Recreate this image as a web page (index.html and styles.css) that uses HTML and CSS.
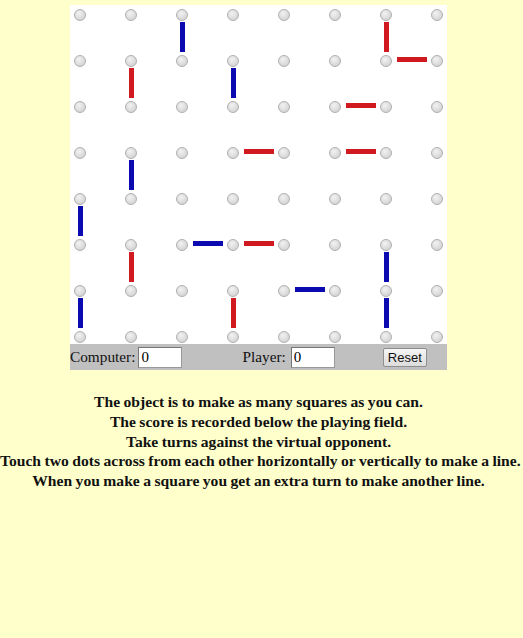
FILE: index.html
```html
<!DOCTYPE html>
<html>
<head>
<meta charset="utf-8">
<title>Dots and Boxes</title>
<link rel="stylesheet" href="styles.css">
</head>
<body>
<div class="game">
  <div class="board">
    <div class="drow"><i class="d"></i><b class="h"></b><i class="d"></i><b class="h"></b><i class="d"></i><b class="h"></b><i class="d"></i><b class="h"></b><i class="d"></i><b class="h"></b><i class="d"></i><b class="h"></b><i class="d"></i><b class="h"></b><i class="d"></i></div>
    <div class="grow"><b class="v"></b><b class="v"></b><b class="v blue"></b><b class="v"></b><b class="v"></b><b class="v"></b><b class="v red"></b><b class="v"></b></div>
    <div class="drow"><i class="d"></i><b class="h"></b><i class="d"></i><b class="h"></b><i class="d"></i><b class="h"></b><i class="d"></i><b class="h"></b><i class="d"></i><b class="h"></b><i class="d"></i><b class="h"></b><i class="d"></i><b class="h red"></b><i class="d"></i></div>
    <div class="grow"><b class="v"></b><b class="v red"></b><b class="v"></b><b class="v blue"></b><b class="v"></b><b class="v"></b><b class="v"></b><b class="v"></b></div>
    <div class="drow"><i class="d"></i><b class="h"></b><i class="d"></i><b class="h"></b><i class="d"></i><b class="h"></b><i class="d"></i><b class="h"></b><i class="d"></i><b class="h"></b><i class="d"></i><b class="h red"></b><i class="d"></i><b class="h"></b><i class="d"></i></div>
    <div class="grow"><b class="v"></b><b class="v"></b><b class="v"></b><b class="v"></b><b class="v"></b><b class="v"></b><b class="v"></b><b class="v"></b></div>
    <div class="drow"><i class="d"></i><b class="h"></b><i class="d"></i><b class="h"></b><i class="d"></i><b class="h"></b><i class="d"></i><b class="h red"></b><i class="d"></i><b class="h"></b><i class="d"></i><b class="h red"></b><i class="d"></i><b class="h"></b><i class="d"></i></div>
    <div class="grow"><b class="v"></b><b class="v blue"></b><b class="v"></b><b class="v"></b><b class="v"></b><b class="v"></b><b class="v"></b><b class="v"></b></div>
    <div class="drow"><i class="d"></i><b class="h"></b><i class="d"></i><b class="h"></b><i class="d"></i><b class="h"></b><i class="d"></i><b class="h"></b><i class="d"></i><b class="h"></b><i class="d"></i><b class="h"></b><i class="d"></i><b class="h"></b><i class="d"></i></div>
    <div class="grow"><b class="v blue"></b><b class="v"></b><b class="v"></b><b class="v"></b><b class="v"></b><b class="v"></b><b class="v"></b><b class="v"></b></div>
    <div class="drow"><i class="d"></i><b class="h"></b><i class="d"></i><b class="h"></b><i class="d"></i><b class="h blue"></b><i class="d"></i><b class="h red"></b><i class="d"></i><b class="h"></b><i class="d"></i><b class="h"></b><i class="d"></i><b class="h"></b><i class="d"></i></div>
    <div class="grow"><b class="v"></b><b class="v red"></b><b class="v"></b><b class="v"></b><b class="v"></b><b class="v"></b><b class="v blue"></b><b class="v"></b></div>
    <div class="drow"><i class="d"></i><b class="h"></b><i class="d"></i><b class="h"></b><i class="d"></i><b class="h"></b><i class="d"></i><b class="h"></b><i class="d"></i><b class="h blue"></b><i class="d"></i><b class="h"></b><i class="d"></i><b class="h"></b><i class="d"></i></div>
    <div class="grow"><b class="v blue"></b><b class="v"></b><b class="v"></b><b class="v red"></b><b class="v"></b><b class="v"></b><b class="v blue"></b><b class="v"></b></div>
    <div class="drow"><i class="d"></i><b class="h"></b><i class="d"></i><b class="h"></b><i class="d"></i><b class="h"></b><i class="d"></i><b class="h"></b><i class="d"></i><b class="h"></b><i class="d"></i><b class="h"></b><i class="d"></i><b class="h"></b><i class="d"></i></div>
  </div>
  <div class="score">
    <label class="grp comp">Computer:<input class="num" type="text" value="0"></label>
    <label class="grp play">Player:<input class="num" type="text" value="0"></label>
    <button class="reset" type="button">Reset</button>
  </div>
</div>
<div class="info">
  <p>The object is to make as many squares as you can.</p>
  <p>The score is recorded below the playing field.</p>
  <p>Take turns against the virtual opponent.</p>
  <p>Touch two dots across from each other horizontally or vertically to make a line.</p>
  <p>When you make a square you get an extra turn to make another line.</p>
</div>
</body>
</html>
```

FILE: styles.css
```css
html, body {
  margin: 0;
  padding: 0;
  background: #ffffcc;
}
body {
  font-family: "Liberation Serif", "Times New Roman", serif;
  color: #111;
  overflow: hidden;
}
.game {
  width: 377px;
  margin: 5px 0 0 70px;
}
.board {
  background: #fff;
  padding: 4px 4px 1px 4px;
  display: flex;
  flex-direction: column;
}
.drow {
  display: flex;
  height: 12px;
}
.grow {
  display: flex;
  column-gap: 39px;
  height: 34px;
}
.d {
  display: block;
  width: 10px;
  height: 10px;
  flex: 0 0 10px;
  border-radius: 50%;
  border: 1px solid #b0b0b0;
  background: radial-gradient(circle at 40% 35%, #f2f2f2 0%, #dcdcdc 55%, #cccccc 100%);
}
.h {
  display: block;
  width: 39px;
  flex: 0 0 39px;
}
.h.red::after, .h.blue::after {
  content: "";
  display: block;
  width: 30px;
  height: 5px;
  margin: 2px 0 0 5px;
}
.v {
  display: block;
  width: 12px;
  flex: 0 0 12px;
}
.v.red::after, .v.blue::after {
  content: "";
  display: block;
  width: 5px;
  height: 30px;
  margin: 1px 0 0 4px;
}
.red::after { background: #d11a1f; }
.blue::after { background: #0b0ab0; }
.score {
  background: #c0c0c0;
  height: 26px;
  display: flex;
  align-items: center;
  font-size: 15.3px;
}
.grp {
  display: flex;
  align-items: center;
}
.num {
  box-sizing: border-box;
  width: 44px;
  height: 21px;
  margin: 0 0 0 3px;
  padding: 0 2px;
  border: 1px solid #999;
  border-top-color: #777;
  border-left-color: #777;
  background: #fff;
  font-family: "Liberation Serif", "Times New Roman", serif;
  font-size: 15px;
  color: #000;
}
.play {
  margin-left: 60px;
}
.play .num {
  margin-left: 5px;
}
.reset {
  margin-left: 48px;
  box-sizing: border-box;
  width: 44px;
  height: 19px;
  padding: 0;
  font-family: "Liberation Sans", Arial, sans-serif;
  font-size: 13px;
  color: #111;
  background: linear-gradient(#f6f6f6, #dcdcdc);
  border: 1px solid #8e8e8e;
  border-radius: 2px;
}
.info {
  margin-top: 22px;
  padding-right: 6px;
  text-align: center;
  font-weight: bold;
  font-size: 15.6px;
  line-height: 19.75px;
  word-spacing: -0.4px;
  white-space: nowrap;
}
.info p {
  margin: 0;
}
```
